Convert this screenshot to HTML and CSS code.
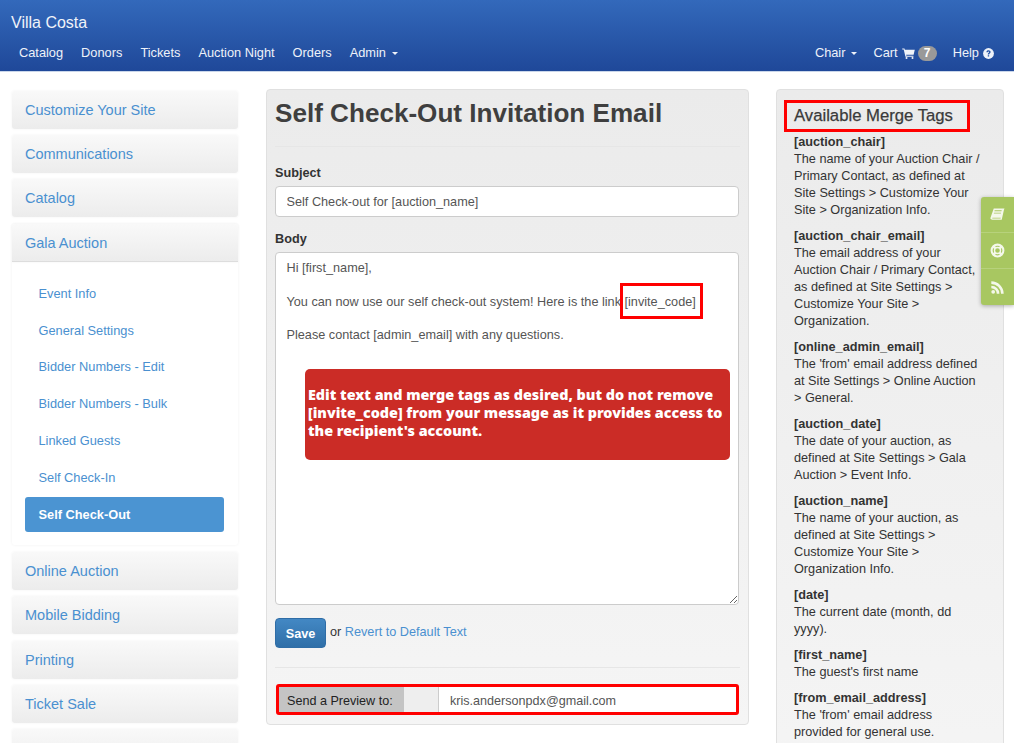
FILE: index.html
```html
<!DOCTYPE html>
<html lang="en">
<head>
<meta charset="utf-8">
<title>Self Check-Out Invitation Email</title>
<link rel="stylesheet" href="styles.css">
</head>
<body>
<header class="navbar">
  <a class="brand">Villa Costa</a>
  <nav class="navrow">
    <ul class="navlist">
      <li>Catalog</li>
      <li>Donors</li>
      <li>Tickets</li>
      <li>Auction Night</li>
      <li>Orders</li>
      <li>Admin <span class="caret"></span></li>
    </ul>
    <ul class="navlist navright">
      <li>Chair <span class="caret"></span></li>
      <li>Cart
        <svg class="ico-cart" viewBox="0 0 16 14"><path fill="currentColor" d="M0 .6h2.900l.4 1.600H16l-1.500 6.400H5l.3 1.200h9v1.300H4.100L1.900 1.900H0zM5.500 11.300a1.300 1.300 0 1 1 0 2.600 1.300 1.300 0 0 1 0-2.600zm7.600 0a1.300 1.300 0 1 1 0 2.600 1.300 1.300 0 0 1 0-2.600z"/></svg>
        <span class="badge">7</span>
      </li>
      <li>Help
        <svg class="ico-help" viewBox="0 0 12 12"><circle cx="6" cy="6" r="5.900" fill="currentColor"/><path d="M3.700 4.500C3.800 3.200 4.800 2.500 6 2.500c1.300 0 2.300.8 2.300 1.900 0 1.600-1.600 1.500-1.600 2.700H5.200c0-1.900 1.500-1.800 1.500-2.700 0-.4-.3-.7-.7-.7-.5 0-.8.300-.9.800zM5.200 7.800h1.500v1.500H5.200z" fill="#2351a3"/></svg>
      </li>
    </ul>
  </nav>
</header>

<div class="page">
  <aside class="sidebar">
    <a class="side-head">Customize Your Site</a>
    <a class="side-head">Communications</a>
    <a class="side-head">Catalog</a>
    <div class="side-group">
      <a class="side-head side-open">Gala Auction</a>
      <ul class="sub">
        <li>Event Info</li>
        <li>General Settings</li>
        <li>Bidder Numbers - Edit</li>
        <li>Bidder Numbers - Bulk</li>
        <li>Linked Guests</li>
        <li>Self Check-In</li>
        <li class="active">Self Check-Out</li>
      </ul>
    </div>
    <a class="side-head">Online Auction</a>
    <a class="side-head">Mobile Bidding</a>
    <a class="side-head">Printing</a>
    <a class="side-head">Ticket Sale</a>
    <a class="side-head">&nbsp;</a>
  </aside>

  <main class="well main">
    <h1 class="title">Self Check-Out Invitation Email</h1>
    <hr class="rule rule-top">
    <label class="label label-subject">Subject</label>
    <input class="field" type="text" value="Self Check-out for [auction_name]">
    <label class="label label-body">Body</label>
    <div class="bodywrap">
      <textarea class="field area">Hi [first_name],

You can now use our self check-out system! Here is the link [invite_code]

Please contact [admin_email] with any questions.</textarea>
      <span class="mark mark-code"></span>
      <div class="callout">Edit text and merge tags as desired, but do not remove [invite_code] from your message as it provides access to the recipient's account.</div>
    </div>
    <div class="actions">
      <button class="btn" type="button">Save</button>
      <span class="or">or <a class="link">Revert to Default Text</a></span>
    </div>
    <hr class="rule rule-bottom">
    <div class="preview">
      <span class="preview-label">Send a Preview to:</span>
      <span class="preview-gap"></span>
      <span class="preview-input">kris.andersonpdx@gmail.com</span>
    </div>
  </main>

  <aside class="well tags">
    <h2 class="tags-title">Available Merge Tags</h2>
    <dl class="taglist">
      <dt>[auction_chair]</dt>
      <dd>The name of your Auction Chair / Primary Contact, as defined at Site Settings &gt; Customize Your Site &gt; Organization Info.</dd>
      <dt>[auction_chair_email]</dt>
      <dd>The email address of your Auction Chair / Primary Contact, as defined at Site Settings &gt; Customize Your Site &gt; Organization.</dd>
      <dt>[online_admin_email]</dt>
      <dd>The 'from' email address defined at Site Settings &gt; Online Auction &gt; General.</dd>
      <dt>[auction_date]</dt>
      <dd>The date of your auction, as defined at Site Settings &gt; Gala Auction &gt; Event Info.</dd>
      <dt>[auction_name]</dt>
      <dd>The name of your auction, as defined at Site Settings &gt; Customize Your Site &gt; Organization Info.</dd>
      <dt>[date]</dt>
      <dd>The current date (month, dd yyyy).</dd>
      <dt>[first_name]</dt>
      <dd>The guest's first name</dd>
      <dt>[from_email_address]</dt>
      <dd>The 'from' email address provided for general use.</dd>
    </dl>
  </aside>
</div>

<div class="floatbar">
  <a class="float-item"><svg viewBox="0 0 16 16"><path fill="currentColor" d="M4 1.500h11.500l-.6 1.300-2.400 10.700H2.200C.6 13.500.2 12.300.6 11.300zM5 3.500l-.3 1h7.500l.3-1zM4.300 6l-.2 1h7.500l.2-1zM2.900 11.500c-.6 0-.7.800 0 .8h8.300l.3-.8z"/></svg></a>
  <a class="float-item"><svg viewBox="0 0 16 16"><g fill="none" stroke="currentColor"><circle cx="8" cy="8" r="6.300" stroke-width="2.200"/><circle cx="8" cy="8" r="3.200" stroke-width="1.500"/><path stroke-width="2.800" d="M3.500 3.500l2.300 2.300M12.500 3.500l-2.300 2.300M3.500 12.500l2.300-2.300M12.500 12.500l-2.300-2.300"/></g></svg></a>
  <a class="float-item"><svg viewBox="0 0 16 16"><circle cx="3.400" cy="12.600" r="2" fill="currentColor"/><path fill="currentColor" d="M1.400 6v2.800a5.800 5.800 0 0 1 5.800 5.800H10A8.600 8.600 0 0 0 1.400 6zM1.400 1.400v2.800a10.400 10.400 0 0 1 10.400 10.400h2.800A13.200 13.200 0 0 0 1.400 1.400z"/></svg></a>
</div>
</body>
</html>
```
FILE: styles.css
```css
* { box-sizing: border-box; }
html, body { height: 743px; overflow: hidden; }
body {
  margin: 0;
  background: #fff;
  color: #333;
  font-family: "Liberation Sans", Arial, sans-serif;
  font-size: 13px;
  line-height: 17px;
}

/* navbar */
.navbar {
  height: 72px;
  padding: 0 20px 0 11px;
  background: linear-gradient(#3369bb, #1f4899);
  border-bottom: 1px solid #c9d6ea;
  color: #eef2f9;
}
.brand { display: block; padding-top: 13px; font-size: 16px; line-height: 19px; color: #f0f3f9; }
.navrow { display: flex; justify-content: space-between; padding: 12px 0 0 8px; }
.navlist { display: flex; gap: 18px; margin: 0; padding: 0; list-style: none; font-size: 12.800px; line-height: 18px; }
.navlist li { display: flex; align-items: center; gap: 3px; white-space: nowrap; }
.navright { gap: 16px; }
.caret {
  display: inline-block;
  width: 0; height: 0;
  margin-left: 3px;
  border-top: 3px solid currentColor;
  border-left: 3px solid transparent;
  border-right: 3px solid transparent;
}
.ico-cart { width: 13px; height: 11px; margin-left: 1px; }
.ico-help { width: 11px; height: 11px; margin-left: 1px; }
.badge {
  display: inline-block;
  width: 19px; height: 15px;
  border-radius: 8px;
  background: #999;
  color: #fff;
  font-size: 12px;
  font-weight: bold;
  line-height: 15px;
  text-align: center;
}

/* page grid */
.page { display: flex; align-items: flex-start; padding: 17px 0 0 12px; }

/* sidebar */
.sidebar { width: 226px; flex: none; display: flex; flex-direction: column; gap: 6.400px; padding-top: 1.600px; }
.side-head {
  display: block;
  height: 38px;
  padding-left: 13px;
  border-radius: 3px;
  background: linear-gradient(#f9f9f9, #ececec);
  box-shadow: 0 0 3px #f2f2f2;
  color: #4a90d0;
  font-size: 14.500px;
  line-height: 38px;
}
.side-open { border-radius: 3px 3px 0 0; border-bottom: 1px solid #ddd; }
.side-group { box-shadow: 0 0 3px #f0f0f0; border-radius: 3px; }
.sub { list-style: none; margin: 0; padding: 14px 14px 13.600px 13px; }
.sub li {
  height: 35px;
  margin-bottom: 1.830px;
  padding-left: 13.500px;
  color: #4a90d0;
  font-size: 12.800px;
  line-height: 35px;
}
.sub li:last-child { margin-bottom: 0; }
.sub .active { background: #4b94d2; color: #fff; font-weight: bold; border-radius: 3px; }

/* panels */
.well {
  border: 1px solid #e0e0e0;
  border-radius: 4px;
  background: linear-gradient(#ebebeb, #f5f5f5);
}
.main { position: relative; width: 483px; height: 636px; margin-left: 28px; flex: none; padding: 0 8px; }
.title { margin: 0; padding-top: 6px; font-size: 26.100px; line-height: 35px; font-weight: bold; color: #3f3f3f; }
.rule { border: 0; border-top: 1px solid #e6e6e6; margin: 0; }
.rule-top { margin-top: 15px; }
.label { display: block; font-size: 12.700px; font-weight: bold; line-height: 17px; }
.label-subject { margin-top: 18px; }
.label-body { margin-top: 14px; }
.field {
  display: block;
  width: 464px;
  border: 1px solid #ccc;
  border-radius: 4px;
  background: #fff;
  color: #555;
  font-family: inherit;
  font-size: 12.700px;
}
input.field { height: 31px; margin-top: 4px; padding: 0 10.500px; }
.bodywrap { position: relative; margin-top: 4px; }
.area { height: 353px; padding: 7px 10.500px; line-height: 16.800px; resize: vertical; }
.mark { position: absolute; border: 3px solid #f00; }
.mark-code { left: 345px; top: 31px; width: 83px; height: 36px; }
.callout {
  position: absolute;
  left: 30px; top: 117px;
  width: 425px; height: 91px;
  padding: 17px 3px 0;
  border-radius: 5px;
  background: #cb2c26;
  color: #fff;
  font-family: "Noto Sans", sans-serif;
  font-size: 14.350px;
  font-weight: 900;
  line-height: 18px;
}
.actions { display: flex; align-items: flex-start; margin-top: 13px; }
.btn {
  width: 51px; height: 30px;
  padding: 1px 0 0;
  border: 1px solid #2f6da6;
  border-radius: 4px;
  background: linear-gradient(#4388c4, #2f6fa8);
  color: #fff;
  font-family: inherit;
  font-size: 12.700px;
  font-weight: bold;
}
.or { margin: 6px 0 0 4px; font-size: 12.700px; }
.link { color: #4a90d0; }
.rule-bottom { margin-top: 19px; }
.preview {
  display: flex;
  height: 31px;
  margin: 16px 0 0 1px;
  width: 463px;
  border: 3px solid #f00;
  border-radius: 3px;
  font-size: 12.600px;
  line-height: 28px;
}
.preview-label { width: 125px; padding-left: 8px; background: #c4c4c4; color: #222; }
.preview-gap { width: 35px; background: #eee; border-right: 1px solid #ccc; }
.preview-input { flex: 1; padding-left: 11px; background: #fff; color: #555; }

.tags { position: relative; width: 228px; height: 720px; margin-left: 27px; flex: none; padding: 0 22px 0 17px; }
.tags-title {
  width: 186px; height: 32px;
  margin: 10px 0 0 -10px;
  padding-left: 7px;
  border: 3px solid #f00;
  color: #3a3a3a;
  font-size: 16.700px;
  font-weight: normal;
  -webkit-text-stroke: .25px #3a3a3a;
  line-height: 26px;
  white-space: nowrap;
}
.taglist { margin: 2px 0 0; font-size: 12.700px; line-height: 17px; }
.taglist dt { font-weight: bold; }
.taglist dd { margin: 0 0 9px; }

/* floating tab */
.floatbar {
  position: fixed;
  right: 0; top: 197px;
  width: 33px; height: 108px;
  border-radius: 3px 0 0 3px;
  background: #a8c761;
  box-shadow: 0 1px 4px rgba(0,0,0,.3);
  color: #f4f8ea;
}
.float-item { display: flex; align-items: center; justify-content: center; height: 36px; border-bottom: 1px solid #b7d27c; }
.float-item:last-child { border-bottom: 0; }
.float-item svg { width: 15px; height: 15px; }
```
